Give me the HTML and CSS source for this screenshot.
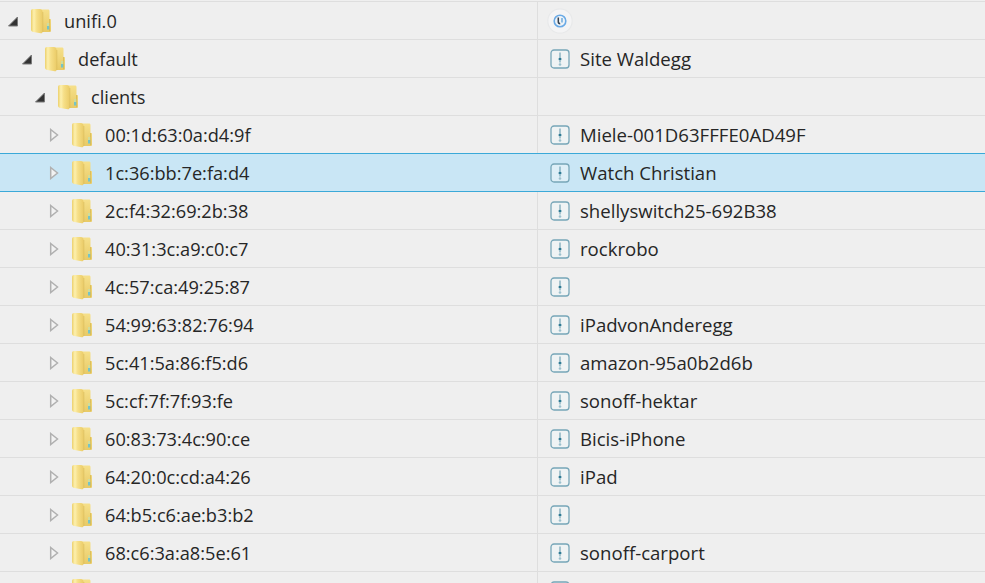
FILE: index.html
```html
<!DOCTYPE html>
<html lang="en">
<head>
<meta charset="utf-8">
<title>unifi.0</title>
<link rel="stylesheet" href="styles.css">
</head>
<body>
<svg class="defs" width="0" height="0" aria-hidden="true">
  <defs>
    <linearGradient id="fg" x1="0" y1="0" x2="1" y2="0">
      <stop offset="0" stop-color="#ecd06c"/><stop offset=".25" stop-color="#fdf0ae"/><stop offset=".5" stop-color="#f6df88"/><stop offset="1" stop-color="#ebcc68"/>
    </linearGradient>
    <linearGradient id="bk" x1="0" y1="0" x2="0" y2="1">
      <stop offset="0" stop-color="#f6e08a"/><stop offset="1" stop-color="#e8ca66"/>
    </linearGradient>
    <symbol id="folder" viewBox="0 0 22 26">
      <path d="M8 1.500h10c1 0 1.500.6 1.500 1.500v8h.7c.6 0 .8.400.8 1v10.500c0 1-.6 1.500-1.500 1.500H8z" fill="url(#bk)"/>
      <path d="M3 1h6.500c1.800 0 3 1 3 2.800V24c0 1-.8 1.500-1.800 1.300L3.500 24C2 23.700 1 23 1 21.800V3c0-1.200.8-2 2-2z" fill="url(#fg)"/>
      <path d="M12.800 4v20" stroke="#dcbf5e" stroke-width=".8" fill="none"/>
      <path d="M19.500 11v12" stroke="#d6b955" stroke-width=".8" fill="none"/>
      <rect x="17" y="15" width="2.200" height="3.500" fill="#cfdc9c"/>
      <rect x="17" y="18" width="2.200" height="3.500" fill="#74c4c8"/>
    </symbol>
    <symbol id="state" viewBox="0 0 20 20">
      <rect x="1" y="1" width="18" height="18" rx="3" fill="#eef5f7" fill-opacity=".55" stroke="#77a6b8" stroke-width="1.300"/>
      <path d="M10 3.500v5M10 12v1.500" stroke="#5b93a8" stroke-width="1" fill="none"/>
      <circle cx="10" cy="10" r="1.500" fill="#2f7a94"/>
      <circle cx="10" cy="15.500" r="1.300" fill="#9cc0cd"/>
    </symbol>
    <symbol id="open" viewBox="0 0 12 14">
      <path d="M10.500 3v9H1.500z" fill="#333" stroke="#7a7a7a" stroke-width="1"/>
    </symbol>
    <symbol id="closed" viewBox="0 0 12 14">
      <path d="M2.700 1.500l6.800 5.500-6.800 5.500z" fill="#f2f2f2" stroke="#b0b0b0" stroke-width="1.500"/>
    </symbol>
  </defs>
</svg>
<main class="tree">
  <div class="row">
    <div class="name d0"><svg class="arrow"><use href="#open"/></svg><svg class="folder"><use href="#folder"/></svg><span>unifi.0</span></div>
    <div class="value">
      <svg class="logo" viewBox="0 0 26 26"><circle cx="13" cy="13" r="12.200" fill="#f4f4f5" stroke="#e8e9ea" stroke-width="1.200"/><circle cx="13" cy="13" r="5.800" fill="#eef3f8" stroke="#6aaae6" stroke-width="1.600"/><path d="M11.300 9.500v4.300c0 1.200.8 1.900 1.900 1.900" fill="none" stroke="#34404e" stroke-width="1.500"/><path d="M15 10v4.500" fill="none" stroke="#5a9fd8" stroke-width="1.300"/></svg>
    </div>
  </div>
  <div class="row">
    <div class="name d1"><svg class="arrow"><use href="#open"/></svg><svg class="folder"><use href="#folder"/></svg><span>default</span></div>
    <div class="value"><svg class="state"><use href="#state"/></svg><span>Site Waldegg</span></div>
  </div>
  <div class="row">
    <div class="name d2"><svg class="arrow"><use href="#open"/></svg><svg class="folder"><use href="#folder"/></svg><span>clients</span></div>
    <div class="value"></div>
  </div>
  <div class="row">
    <div class="name d3"><svg class="arrow"><use href="#closed"/></svg><svg class="folder"><use href="#folder"/></svg><span>00:1d:63:0a:d4:9f</span></div>
    <div class="value"><svg class="state"><use href="#state"/></svg><span>Miele-001D63FFFE0AD49F</span></div>
  </div>
  <div class="row selected">
    <div class="name d3"><svg class="arrow"><use href="#closed"/></svg><svg class="folder"><use href="#folder"/></svg><span>1c:36:bb:7e:fa:d4</span></div>
    <div class="value"><svg class="state"><use href="#state"/></svg><span>Watch Christian</span></div>
  </div>
  <div class="row">
    <div class="name d3"><svg class="arrow"><use href="#closed"/></svg><svg class="folder"><use href="#folder"/></svg><span>2c:f4:32:69:2b:38</span></div>
    <div class="value"><svg class="state"><use href="#state"/></svg><span>shellyswitch25-692B38</span></div>
  </div>
  <div class="row">
    <div class="name d3"><svg class="arrow"><use href="#closed"/></svg><svg class="folder"><use href="#folder"/></svg><span>40:31:3c:a9:c0:c7</span></div>
    <div class="value"><svg class="state"><use href="#state"/></svg><span>rockrobo</span></div>
  </div>
  <div class="row">
    <div class="name d3"><svg class="arrow"><use href="#closed"/></svg><svg class="folder"><use href="#folder"/></svg><span>4c:57:ca:49:25:87</span></div>
    <div class="value"><svg class="state"><use href="#state"/></svg></div>
  </div>
  <div class="row">
    <div class="name d3"><svg class="arrow"><use href="#closed"/></svg><svg class="folder"><use href="#folder"/></svg><span>54:99:63:82:76:94</span></div>
    <div class="value"><svg class="state"><use href="#state"/></svg><span>iPadvonAnderegg</span></div>
  </div>
  <div class="row">
    <div class="name d3"><svg class="arrow"><use href="#closed"/></svg><svg class="folder"><use href="#folder"/></svg><span>5c:41:5a:86:f5:d6</span></div>
    <div class="value"><svg class="state"><use href="#state"/></svg><span>amazon-95a0b2d6b</span></div>
  </div>
  <div class="row">
    <div class="name d3"><svg class="arrow"><use href="#closed"/></svg><svg class="folder"><use href="#folder"/></svg><span>5c:cf:7f:7f:93:fe</span></div>
    <div class="value"><svg class="state"><use href="#state"/></svg><span>sonoff-hektar</span></div>
  </div>
  <div class="row">
    <div class="name d3"><svg class="arrow"><use href="#closed"/></svg><svg class="folder"><use href="#folder"/></svg><span>60:83:73:4c:90:ce</span></div>
    <div class="value"><svg class="state"><use href="#state"/></svg><span>Bicis-iPhone</span></div>
  </div>
  <div class="row">
    <div class="name d3"><svg class="arrow"><use href="#closed"/></svg><svg class="folder"><use href="#folder"/></svg><span>64:20:0c:cd:a4:26</span></div>
    <div class="value"><svg class="state"><use href="#state"/></svg><span>iPad</span></div>
  </div>
  <div class="row">
    <div class="name d3"><svg class="arrow"><use href="#closed"/></svg><svg class="folder"><use href="#folder"/></svg><span>64:b5:c6:ae:b3:b2</span></div>
    <div class="value"><svg class="state"><use href="#state"/></svg></div>
  </div>
  <div class="row">
    <div class="name d3"><svg class="arrow"><use href="#closed"/></svg><svg class="folder"><use href="#folder"/></svg><span>68:c6:3a:a8:5e:61</span></div>
    <div class="value"><svg class="state"><use href="#state"/></svg><span>sonoff-carport</span></div>
  </div>
  <div class="row">
    <div class="name d3"><svg class="arrow"><use href="#closed"/></svg><svg class="folder"><use href="#folder"/></svg></div>
    <div class="value"><svg class="state"><use href="#state"/></svg></div>
  </div>
</main>
</body>
</html>
```

FILE: styles.css
```css
html, body {
  margin: 0;
  height: 100%;
  overflow: hidden;
  background: #efefef;
}
.defs { position: absolute; }
.tree {
  height: 583px;
  overflow: hidden;
  padding-top: 1px;
  box-sizing: border-box;
  font: 18.2px/24px "Open Sans", "Noto Sans", sans-serif;
  color: #262626;
}
.row {
  display: grid;
  grid-template-columns: 537px 1fr;
  height: 38px;
  box-sizing: border-box;
  border-top: 1px solid #dedede;
}
.row.selected {
  background: #c9e6f5;
  border-top-color: #3ba9d8;
}
.row.selected + .row { border-top-color: #3ba9d8; }
.name, .value {
  display: flex;
  align-items: center;
  min-width: 0;
  white-space: nowrap;
}
.value {
  border-left: 1px solid #dedede;
  padding-left: 12px;
  font-size: 18.6px;
}
.selected .value { border-left-color: #c9e6f5; }
.d0 { padding-left: 7px; }
.d1 { padding-left: 21px; }
.d2 { padding-left: 34px; }
.d3 { padding-left: 48px; }
.arrow { width: 12px; height: 14px; flex: none; margin-right: 11px; }
.folder { width: 22px; height: 26px; flex: none; margin-right: 12px; }
.state { width: 20px; height: 20px; flex: none; margin-right: 10px; }
.logo { width: 26px; height: 26px; flex: none; margin-left: -3px; }
```
